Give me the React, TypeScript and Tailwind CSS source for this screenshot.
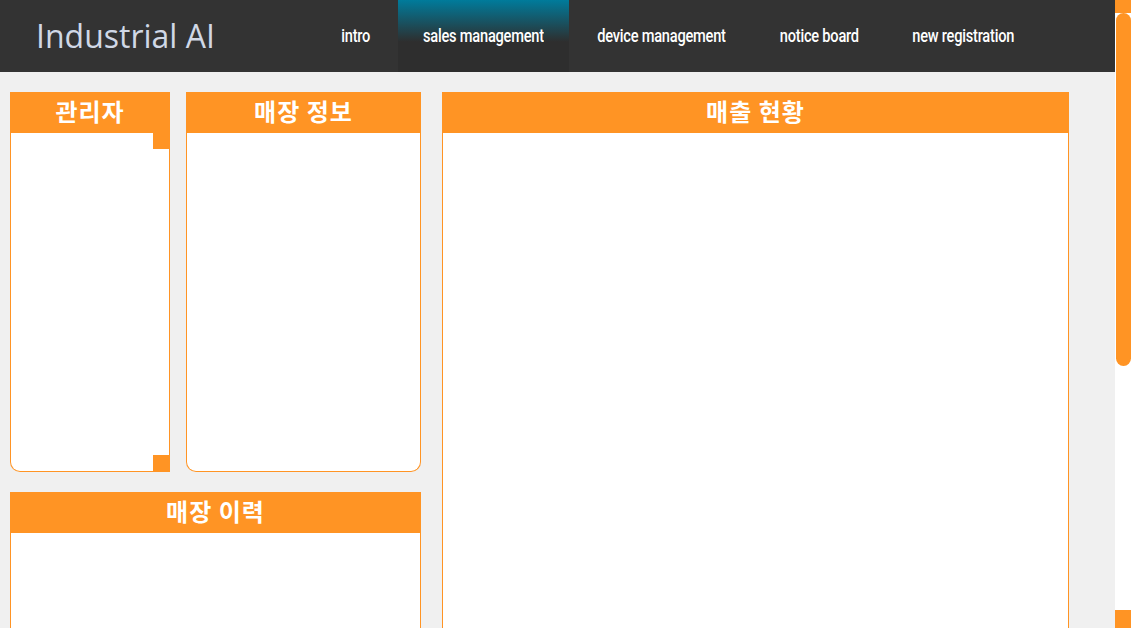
import React from "react";

const navItems = [
  { label: "intro", width: "w-[85px]", active: false },
  { label: "sales management", width: "w-[171px]", active: true },
  { label: "device management", width: "w-[184px]", active: false },
  { label: "notice board", width: "w-[132px]", active: false },
  { label: "new registration", width: "w-[156px]", active: false },
];

function PanelHeader({ title }: { title: string }) {
  return (
    <div className="flex h-[41px] shrink-0 items-center justify-center bg-[#ff9424] pb-1 text-[24px] font-bold tracking-[1px] text-white [font-family:'Noto_Sans_CJK_KR',sans-serif]">
      {title}
    </div>
  );
}

export default function App() {
  return (
    <div className="flex h-screen overflow-hidden bg-[#f0f0f0]">
      <div className="flex-1 overflow-hidden">
        {/* top bar */}
        <header className="flex h-[72px] items-stretch bg-[#333333]">
          <div className="flex w-[313px] items-center pb-[1px] pl-9 text-[32px] text-[#d0d8e6] [font-family:'Open_Sans',sans-serif]">
            Industrial AI
          </div>
          <nav className="flex items-stretch">
            {navItems.map((item) => (
              <div
                key={item.label}
                className={`flex items-center justify-center whitespace-nowrap ${item.width} ${
                  item.active
                    ? "bg-[linear-gradient(to_bottom,#007b9b_0%,#2e2e2e_58%,#2e2e2e_100%)]"
                    : ""
                }`}
              >
                <span className="inline-block scale-x-[0.77] text-[19px] font-medium tracking-[-0.3px] text-white [font-family:Roboto,sans-serif]">
                  {item.label}
                </span>
              </div>
            ))}
          </nav>
        </header>

        {/* dashboard */}
        <main className="flex gap-[21px] pb-[194px] pl-[10px] pt-5">
          <div className="flex w-[411px] flex-col gap-5">
            <div className="flex gap-4">
              <section className="flex h-[380px] w-[160px] flex-col">
                <PanelHeader title="관리자" />
                <div className="flex flex-1 overflow-hidden rounded-bl-[10px] border border-t-0 border-[#ff9424] bg-white">
                  <div className="flex-1" />
                  {/* inner scrollbar */}
                  <div className="flex w-4 flex-col justify-between bg-white">
                    <div className="h-4 bg-[#ff9424]" />
                    <div className="h-4 bg-[#ff9424]" />
                  </div>
                </div>
              </section>
              <section className="flex h-[380px] w-[235px] flex-col">
                <PanelHeader title="매장 정보" />
                <div className="flex-1 rounded-b-[10px] border border-t-0 border-[#ff9424] bg-white" />
              </section>
            </div>
            <section className="flex h-[380px] flex-col">
              <PanelHeader title="매장 이력" />
              <div className="flex-1 border border-t-0 border-[#ff9424] bg-white" />
            </section>
          </div>

          <section className="flex h-[780px] w-[627px] flex-col">
            <PanelHeader title="매출 현황" />
            <div className="flex-1 border border-t-0 border-[#ff9424] bg-white" />
          </section>
        </main>
      </div>

      {/* page scrollbar */}
      <div className="flex w-4 shrink-0 flex-col bg-white">
        <div className="h-[13px] bg-[#ff9424]" />
        <div className="ml-[1px] h-[353px] rounded-b-lg rounded-t-lg bg-[#ff9424]" />
        <div className="flex-1" />
        <div className="h-[18px] bg-[#ff9424]" />
      </div>
    </div>
  );
}
